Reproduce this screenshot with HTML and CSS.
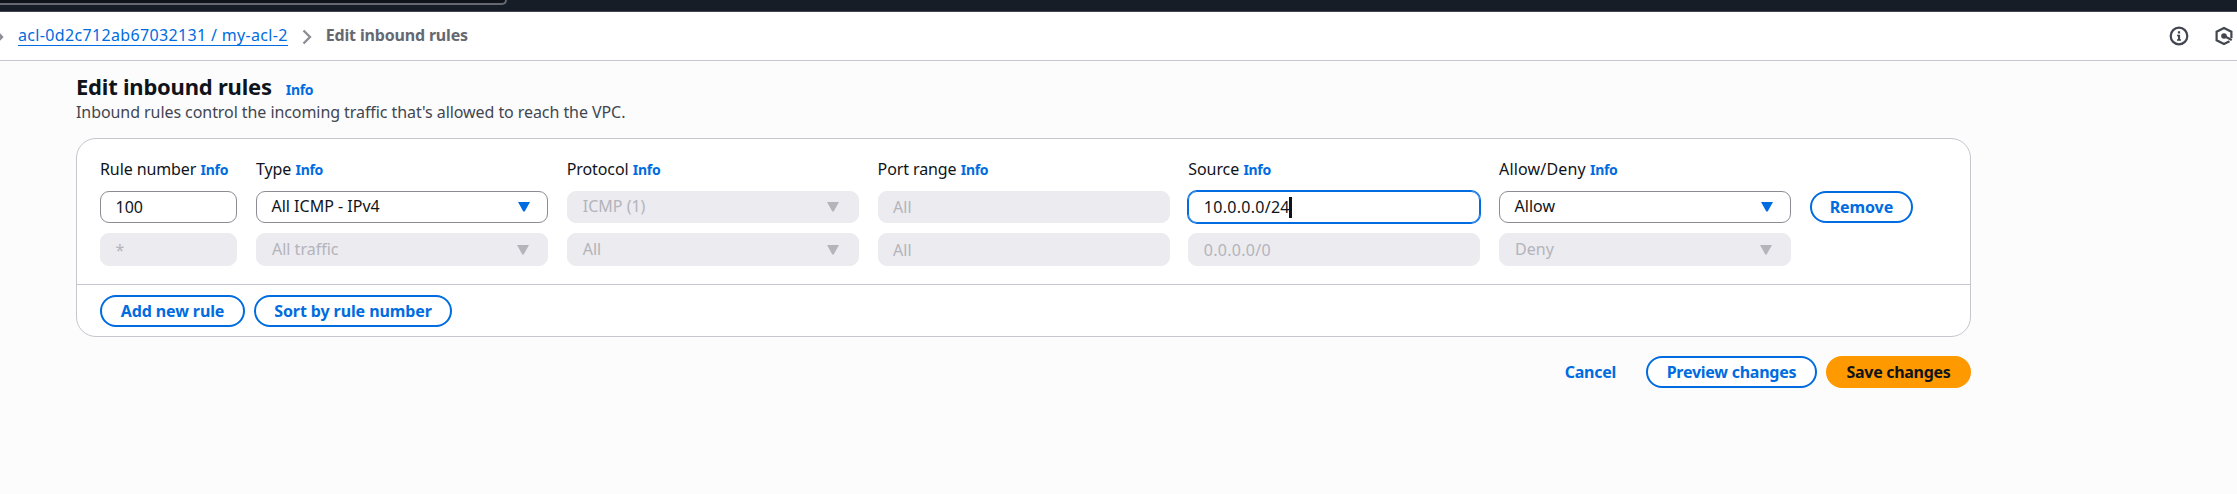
FILE: index.html
```
<!DOCTYPE html>
<html lang="en">
<head>
<meta charset="utf-8">
<title>Edit inbound rules</title>
<link rel="stylesheet" href="styles.css">
</head>
<body>
<header class="topbar"><div class="search"></div></header>
<nav class="crumbs">
  <svg class="chev chev-cut" viewBox="0 0 10 16"><path d="M1.500 1.500 8 8l-6.500 6.500"/></svg>
  <a class="crumb-link">acl-0d2c712ab67032131 / my-acl-2</a>
  <svg class="chev" viewBox="0 0 10 16"><path d="M1.500 1.500 8 8l-6.500 6.500"/></svg>
  <span class="crumb-current">Edit inbound rules</span>
  <div class="tools">
    <svg class="tool" viewBox="0 0 20 20"><circle cx="10" cy="10" r="8.300"/><path class="solid" d="M8.900 5.300h2.200v2.200H8.900zM8 8.800h3.100v4.500h.9v1.500H8v-1.500h1v-3H8z"/></svg>
    <svg class="tool" viewBox="0 0 20 20"><path d="M17.400 12V5.700L10 1.900 2.600 5.700v8.600L10 18.100l5.500-2.800"/><circle class="solid" cx="10" cy="10" r="2.800"/><path d="M10 10l7.800 3.900"/></svg>
  </div>
</nav>
<main class="page">
  <div class="heading"><h1 class="title">Edit inbound rules</h1><a class="info info-title">Info</a></div>
  <p class="desc">Inbound rules control the incoming traffic that's allowed to reach the VPC.</p>
  <section class="card">
    <div class="rules">
      <div class="label"><span>Rule number</span><a class="info">Info</a></div>
      <div class="label"><span>Type</span><a class="info">Info</a></div>
      <div class="label"><span>Protocol</span><a class="info">Info</a></div>
      <div class="label"><span>Port range</span><a class="info">Info</a></div>
      <div class="label"><span>Source</span><a class="info">Info</a></div>
      <div class="label"><span class="wide">Allow/Deny</span><a class="info">Info</a></div>
      <div></div>

      <div class="field"><span>100</span></div>
      <div class="field select"><span>All ICMP - IPv4</span><svg class="arrow" viewBox="0 0 12 10"><path d="M0 0h12L6.700 9.600H5.300z"/></svg></div>
      <div class="field select off"><span>ICMP (1)</span><svg class="arrow" viewBox="0 0 12 10"><path d="M0 0h12L6.700 9.600H5.300z"/></svg></div>
      <div class="field off"><span>All</span></div>
      <div class="field focus"><span class="ip">10.0.0.0/24</span><i class="caret"></i></div>
      <div class="field select"><span>Allow</span><svg class="arrow" viewBox="0 0 12 10"><path d="M0 0h12L6.700 9.600H5.300z"/></svg></div>
      <button class="btn btn-remove">Remove</button>

      <div class="field off"><span>*</span></div>
      <div class="field select off"><span>All traffic</span><svg class="arrow" viewBox="0 0 12 10"><path d="M0 0h12L6.700 9.600H5.300z"/></svg></div>
      <div class="field select off"><span>All</span><svg class="arrow" viewBox="0 0 12 10"><path d="M0 0h12L6.700 9.600H5.300z"/></svg></div>
      <div class="field off"><span>All</span></div>
      <div class="field off"><span class="ip">0.0.0.0/0</span></div>
      <div class="field select off"><span>Deny</span><svg class="arrow" viewBox="0 0 12 10"><path d="M0 0h12L6.700 9.600H5.300z"/></svg></div>
    </div>
    <div class="card-foot">
      <button class="btn btn-add">Add new rule</button>
      <button class="btn btn-sort">Sort by rule number</button>
    </div>
  </section>
  <div class="actions">
    <a class="cancel">Cancel</a>
    <button class="btn btn-preview">Preview changes</button>
    <button class="btn btn-save">Save changes</button>
  </div>
</main>
</body>
</html>
```
FILE: styles.css
```
* { box-sizing: border-box; }
body { margin: 0; height: 494px; overflow: hidden; background: #fcfcfd; color: #0f141a; font: 16px/22px "Noto Sans", "Open Sans", sans-serif; }
.topbar { height: 12px; background: #161d26; border-bottom: 1px solid #424650; }
.search { width: 507px; height: 5px; background: #0f141a; border: 2px solid #656871; border-width: 0 2px 2px 0; border-bottom-right-radius: 8px; }
.crumbs { height: 49px; background: #fff; border-bottom: 1px solid #c6c6cd; display: flex; align-items: center; }
.chev { width: 10px; height: 16px; flex: none; fill: none; stroke: #8c8c94; stroke-width: 2.3; margin: 1px 14px 0 14px; }
.chev-cut { margin-left: -6px; margin-right: 14px; }
.crumb-link { color: #006ce0; line-height: 19px; letter-spacing: 0.34px; border-bottom: 1px solid #006ce0; }
.crumb-current { color: #656871; font-weight: 700; letter-spacing: -0.17px; margin-bottom: 2px; }
.tools { margin-left: auto; margin-right: 3px; display: flex; gap: 25px; }
.tool { width: 20px; height: 20px; fill: none; stroke: #424650; stroke-width: 2.2; }
.tool .solid { fill: #424650; stroke: none; }
.page { width: 1895px; margin-left: 76px; padding-top: 10px; }
.heading { display: flex; align-items: baseline; height: 30px; }
.title { margin: 0; font-size: 22px; line-height: 30px; font-weight: 700; letter-spacing: -0.22px; }
.info { color: #006ce0; font-size: 14px; font-weight: 700; letter-spacing: -0.3px; }
.info-title { margin-left: 14px; }
.desc { margin: 0; color: #424650; letter-spacing: -0.07px; }
.card { margin-top: 15px; height: 199px; border: 1px solid #c6c6cd; border-radius: 20px; background: #fff; display: flex; flex-direction: column; }
.rules { height: 146px; padding: 19px 0 0 23px; display: grid; grid-template-columns: 137.33px repeat(5, 292.13px) 103px; grid-template-rows: 23px 32px 33px; column-gap: 18.67px; row-gap: 10px; border-bottom: 1px solid #c6c6cd; }
.label { display: flex; align-items: baseline; gap: 4.3px; letter-spacing: -0.1px; }
.wide { letter-spacing: 0.15px; }
.field { border: 1px solid #8c8c94; border-radius: 9px; padding: 0 17.500px 0 14.500px; display: flex; align-items: center; }
.select { padding-bottom: 2px; }
.off { background: #ebebf0; border-color: #ebebf0; color: #b4b4bb; padding-right: 18.500px; }
.off.select { padding-left: 15px; }
.focus { border-color: #006ce0; box-shadow: 0 0 0 1px #006ce0; }
.ip { letter-spacing: 0.28px; }
.arrow { width: 12px; height: 10px; margin: 2px 0 0 auto; fill: #006ce0; }
.off .arrow { fill: #b4b4bb; }
.caret { width: 3px; height: 21px; margin-left: -0.5px; background: #0f141a; }
.btn { height: 32px; padding: 0; border: 2px solid #006ce0; border-radius: 16px; background: #fff; color: #006ce0; font: 700 16px/22px "Noto Sans", "Open Sans", sans-serif; letter-spacing: -0.1px; }
.card-foot { display: flex; gap: 9px; padding: 10px 0 0 23px; }
.btn-add { width: 145px; }
.btn-sort { width: 198px; }
.actions { display: flex; align-items: center; justify-content: flex-end; gap: 9px; margin-top: 19px; }
.cancel { color: #006ce0; font-weight: 700; letter-spacing: -0.25px; margin-right: 21px; }
.btn-preview { width: 171px; letter-spacing: -0.25px; }
.btn-save { width: 145px; background: #ff9900; border-color: #ff9900; color: #0f141a; letter-spacing: -0.3px; }
```
